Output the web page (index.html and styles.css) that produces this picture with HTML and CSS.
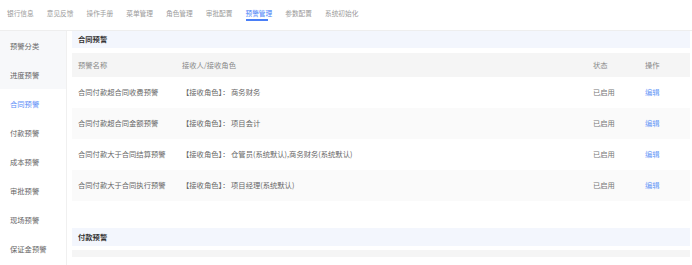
FILE: index.html
```html
<!DOCTYPE html>
<html lang="zh-CN">
<head>
    <meta charset="UTF-8">
    <meta name="viewport" content="width=device-width, initial-scale=1.0">
    <title>预警管理</title>
    <link rel="stylesheet" href="styles.css">
</head>
<body>

<div class="tabs">
    <div class="tab">银行信息</div>
    <div class="tab">意见反馈</div>
    <div class="tab">操作手册</div>
    <div class="tab">菜单管理</div>
    <div class="tab">角色管理</div>
    <div class="tab">审批配置</div>
    <div class="tab active">预警管理<div class="bar"></div></div>
    <div class="tab">参数配置</div>
    <div class="tab">系统初始化</div>
</div>

<div class="main">
    <div class="side">
        <div class="side-item before">预警分类</div>
        <div class="side-item before">进度预警</div>
        <div class="side-item active">合同预警</div>
        <div class="side-item">付款预警</div>
        <div class="side-item">成本预警</div>
        <div class="side-item">审批预警</div>
        <div class="side-item">现场预警</div>
        <div class="side-item">保证金预警</div>
    </div>

    <div class="content">
        <div class="section-title">合同预警</div>
        <div class="table">
            <div class="row head">
                <div>预警名称</div>
                <div>接收人/接收角色</div>
                <div>状态</div>
                <div>操作</div>
            </div>
            <div class="row">
                <div>合同付款超合同收费预警</div>
                <div>【接收角色】： 商务财务</div>
                <div class="status">已启用</div>
                <div><a class="link">编辑</a></div>
            </div>
            <div class="row">
                <div>合同付款超合同金额预警</div>
                <div>【接收角色】： 项目会计</div>
                <div class="status">已启用</div>
                <div><a class="link">编辑</a></div>
            </div>
            <div class="row">
                <div>合同付款大于合同结算预警</div>
                <div>【接收角色】： 仓管员(系统默认),商务财务(系统默认)</div>
                <div class="status">已启用</div>
                <div><a class="link">编辑</a></div>
            </div>
            <div class="row">
                <div>合同付款大于合同执行预警</div>
                <div>【接收角色】： 项目经理(系统默认)</div>
                <div class="status">已启用</div>
                <div><a class="link">编辑</a></div>
            </div>
        </div>

        <div class="section-title second">付款预警</div>
        <div class="table-top"></div>
    </div>
</div>

</body>
</html>
```

FILE: styles.css
```css
body {
    margin: 0;
    font-family: "Noto Sans CJK SC", "Noto Sans", sans-serif;
    background-color: #fff;
    color: #666;
}

.tabs {
    display: flex;
    gap: 13px;
    height: 30px;
    padding-left: 7px;
    border-bottom: 1px solid #eeeeee;
}

.tab {
    font-size: 6.7px;
    line-height: 10px;
    padding-top: 8px;
    color: #9a9a9a;
    white-space: nowrap;
}

.tab.active {
    color: #4a7ff7;
}

.tab .bar {
    width: 22px;
    height: 2px;
    margin-top: 1px;
    background-color: #4a7ff7;
}

.main {
    display: flex;
}

.side {
    width: 66px;
    border-right: 1px solid #f0f0f0;
    height: 234px;
}

.side-item {
    height: 29px;
    line-height: 30px;
    padding-left: 10px;
    font-size: 7.3px;
    color: #666;
}

.side-item.before {
    background-color: #f7f8fa;
}

.side-item.active {
    color: #5b8cf7;
}

.content {
    flex: 1;
    padding-left: 5px;
    padding-right: 2px;
}

.section-title {
    height: 17px;
    line-height: 17px;
    padding-left: 6px;
    background-color: #f3f6fd;
    font-size: 7.3px;
    font-weight: bold;
    color: #333;
}

.section-title.second {
    margin-top: 27px;
    height: 18px;
    line-height: 18px;
}

.table {
    margin-top: 5px;
}

.row {
    display: grid;
    grid-template-columns: 104px 411px 52px 1fr;
    height: 31px;
    line-height: 31px;
    font-size: 7.3px;
}

.row > div {
    padding-left: 6px;
    white-space: nowrap;
}

.row:nth-child(odd) {
    background-color: #fafafa;
}

.row.head {
    height: 24px;
    line-height: 24px;
    background-color: #f5f5f5;
    color: #888;
}

.status {
    color: #777;
}

.link {
    color: #6a9af7;
    cursor: pointer;
}

.table-top {
    margin-top: 4px;
    height: 7px;
    background-color: #f5f5f5;
}
```
